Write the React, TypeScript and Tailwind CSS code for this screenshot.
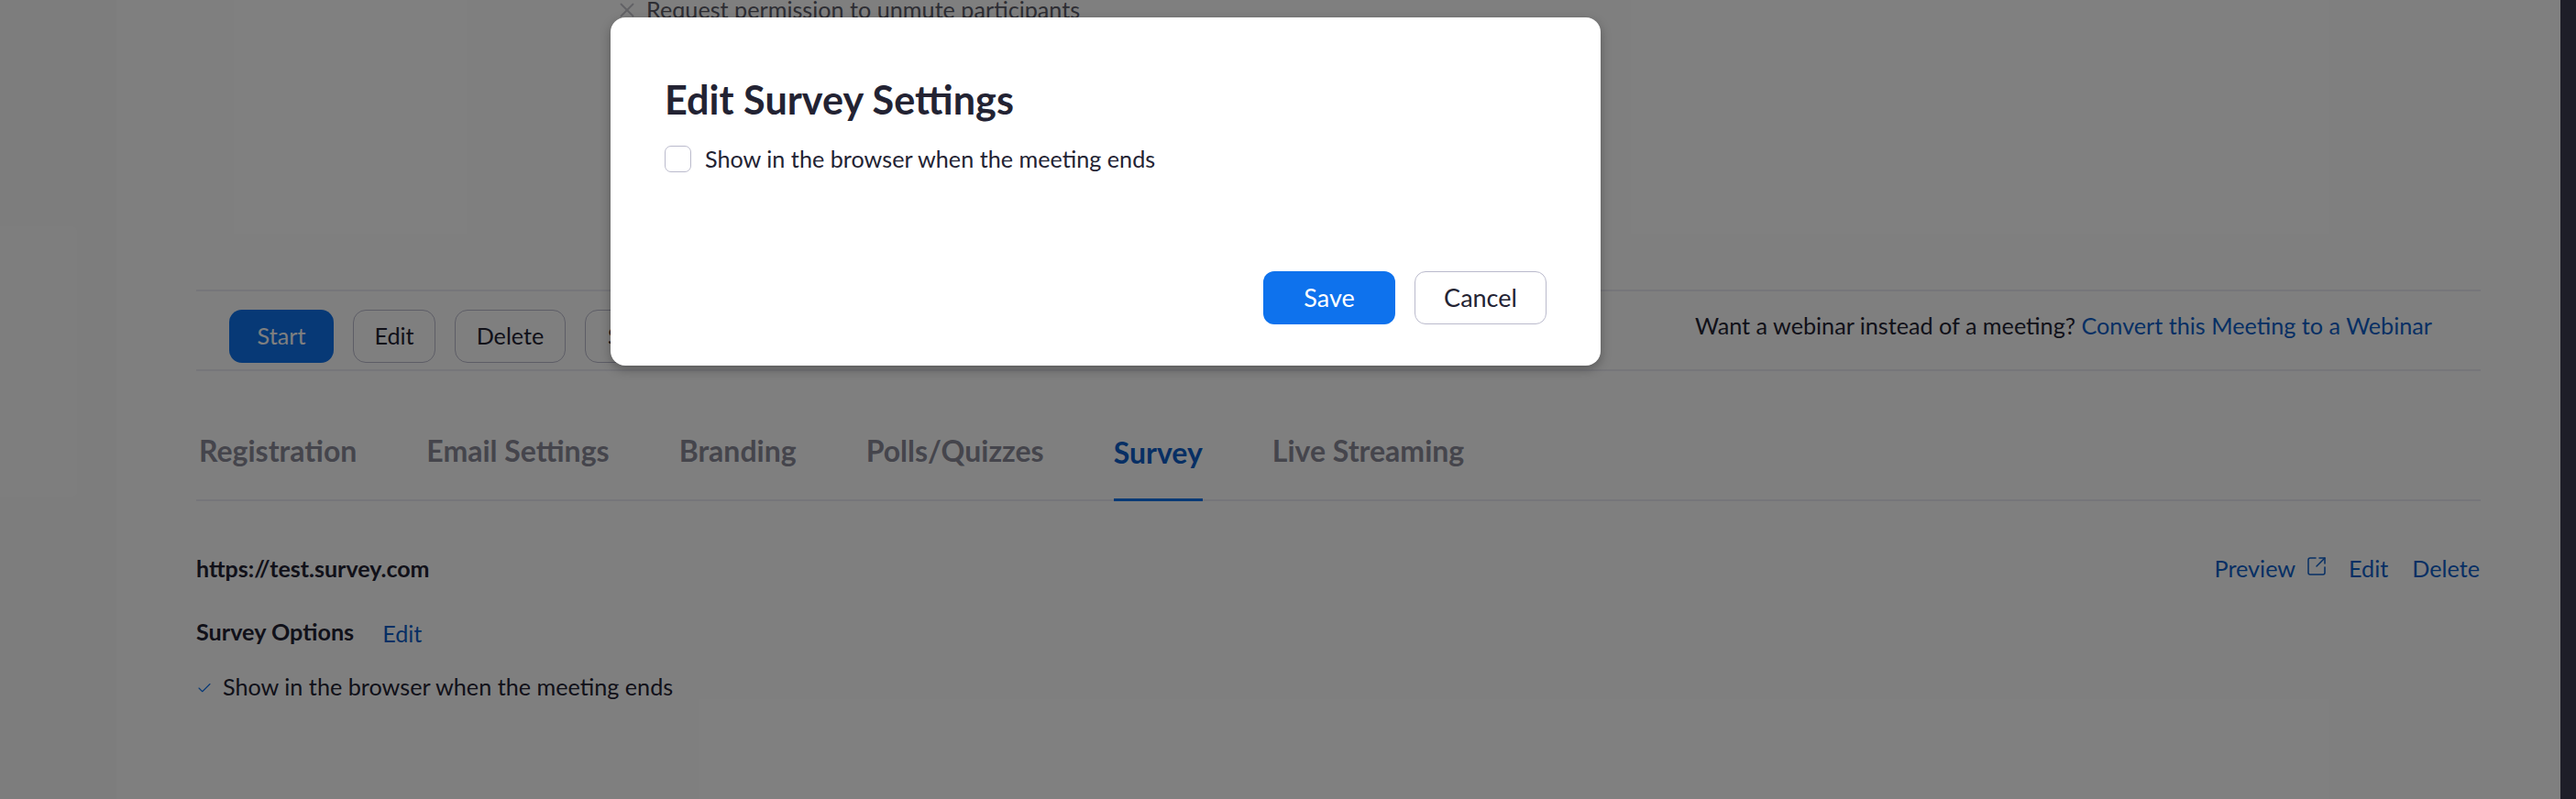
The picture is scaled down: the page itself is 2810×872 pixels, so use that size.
import { Check, X, SquareArrowOutUpRight } from "lucide-react";

const tabs = ["Registration", "Email Settings", "Branding", "Polls/Quizzes", "Survey", "Live Streaming"];

export default function App() {
  return (
    <div className="relative flex h-[872px] w-[2810px] overflow-hidden bg-white font-['Lato',sans-serif] text-[#232333]">
      <aside className="flex h-full w-[127px] shrink-0 flex-col bg-[#fbfbfb] pt-[247px]">
        <div className="h-[295px] w-[84px] rounded-r-md bg-[#fdfdfd]" />
      </aside>

      <main className="flex min-w-0 flex-1 flex-col px-[87px]">
        <div className="flex h-[316px] shrink-0 items-start text-[25.2px] leading-[20px]">
          <X className="ml-[457px] -mt-[2px] h-[26px] w-[26px] text-[#c4c4cc]" strokeWidth={1.75} />
          <span className="ml-[8px] text-[#5a5a66]">Request permission to unmute participants</span>
        </div>

        <div className="flex h-[89px] shrink-0 items-start justify-between border-y-2 border-[#ededf4] pl-[36px] pr-[53px]">
          <div className="mt-[20px] flex gap-[21px] text-[25.2px]">
            <button className="h-[58px] w-[114px] rounded-[14px] bg-[#0e72ed] text-[#ffffff]">Start</button>
            <button className="h-[58px] w-[90px] rounded-[14px] border border-[#babacc]">Edit</button>
            <button className="h-[58px] w-[121px] rounded-[14px] border border-[#babacc]">Delete</button>
            <button className="h-[58px] whitespace-nowrap rounded-[14px] border border-[#babacc] px-[24px]">Save as Template</button>
          </div>
          <p className="mt-[21px] text-[25.2px] leading-[32px]">
            Want a webinar instead of a meeting? <a className="text-[#0e5fc9]">Convert this Meeting to a Webinar</a>
          </p>
        </div>

        <nav className="flex h-[142px] shrink-0 items-end gap-[76px] border-b-2 border-[#ededf4] pl-[3px]">
          {tabs.map((t) => (
            <div
              key={t}
              className={
                t === "Survey"
                  ? "mb-[-2px] border-b-[3px] border-[#0e72ed] pb-[25px] text-[32px] font-bold leading-[50px] text-[#0e5fc9]"
                  : "pb-[28px] text-[32px] font-bold leading-[50px] text-[#8b8b99]"
              }
            >
              {t}
            </div>
          ))}
        </nav>

        <div className="mt-[55px] flex items-center justify-between pr-[1px]">
          <span className="text-[25px] font-bold leading-[36px]">https://test.survey.com</span>
          <div className="flex items-center text-[25.2px] leading-[36px] text-[#0e5fc9]">
            <span>Preview</span>
            <SquareArrowOutUpRight className="mb-[4px] ml-[11px] h-[24px] w-[24px]" strokeWidth={1.5} />
            <span className="ml-[23px]">Edit</span>
            <span className="ml-[26px]">Delete</span>
          </div>
        </div>

        <div className="mt-[31px] flex items-center">
          <span className="text-[25.2px] font-bold leading-[36px]">Survey Options</span>
          <a className="ml-[31px] mt-[4px] text-[25.2px] leading-[36px] text-[#0e5fc9]">Edit</a>
        </div>

        <div className="mt-[22px] flex items-center text-[25.2px] leading-[36px]">
          <Check className="mt-[3px] h-[18px] w-[18px] text-[#0e72ed]" strokeWidth={1.5} />
          <span className="ml-[11px]">Show in the browser when the meeting ends</span>
        </div>
      </main>

      <div className="h-full w-[17px] shrink-0 bg-[#3c3c50]" />

      <div className="absolute inset-0 bg-black/50">
        <div className="ml-[666px] mt-[19px] flex h-[380px] w-[1080px] flex-col rounded-[16px] bg-white px-[59px] pb-[45px] pt-[60px] shadow-[0_4px_12px_rgba(0,0,0,0.3)]">
          <h2 className="text-[43.2px] font-bold leading-[58px] text-[#232333]">Edit Survey Settings</h2>
          <label className="mt-[20px] flex items-center gap-[15px] text-[25.2px] leading-[32px] text-[#232333]">
            <span className="h-[29px] w-[29px] rounded-[7px] border border-[#babacc] bg-white" />
            Show in the browser when the meeting ends
          </label>
          <div className="mt-auto flex justify-end gap-[21px] text-[27px]">
            <button className="h-[58px] w-[144px] rounded-[12px] bg-[#0e72ed] text-white">Save</button>
            <button className="h-[58px] w-[144px] rounded-[12px] border border-[#babacc] bg-white text-[#232333]">Cancel</button>
          </div>
        </div>
      </div>
    </div>
  );
}
